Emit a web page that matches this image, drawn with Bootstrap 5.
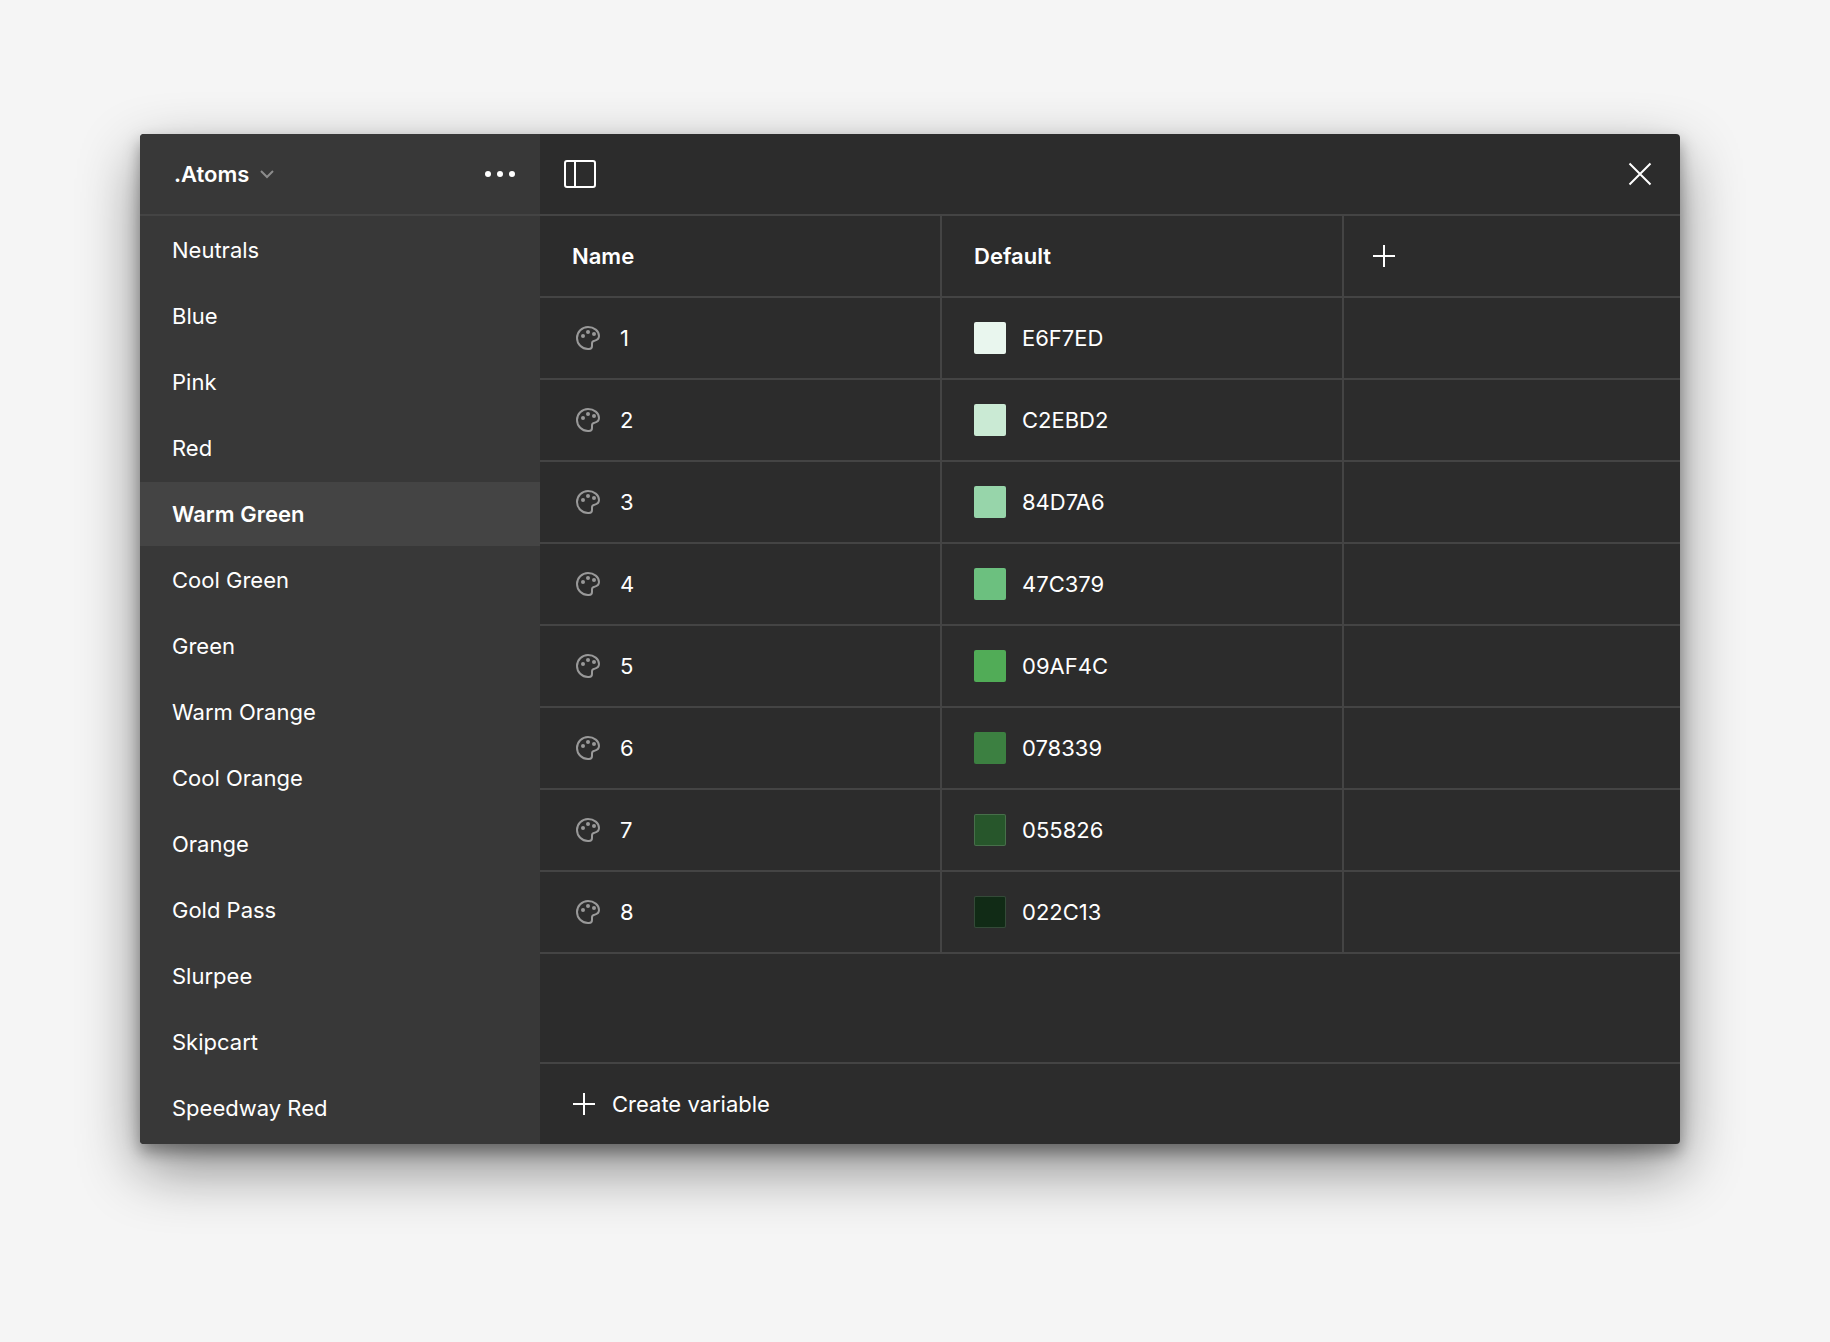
<!DOCTYPE html>
<html lang="en">
<head>
<meta charset="utf-8">
<meta name="viewport" content="width=device-width, initial-scale=1">
<title>Variables</title>
<link href="https://cdn.jsdelivr.net/npm/bootstrap@5.3.0/dist/css/bootstrap.min.css" rel="stylesheet">
<style>
  body { background: #f5f5f5; color: #fff; font-family: Inter, "Liberation Sans", sans-serif; font-size: 22px; line-height: 32px; }
  .stage { padding: 134px 150px 198px 140px; }
  .variables-panel { background: #2c2c2c; border-radius: 4px; box-shadow: 0 24px 60px rgba(0,0,0,.45), 0 8px 16px rgba(0,0,0,.35); }
  .groups { width: 400px; background: #383838; border-radius: 4px 0 0 4px; }
  .bar { height: 82px; border-bottom: 2px solid #444; }
  .groups .bar { padding: 0 24px 0 34px; }
  .plain { background: none; border: 0; padding: 0; color: #fff; display: flex; align-items: center; }
  svg { display: block; flex: none; fill: none; stroke: #fff; stroke-width: 2; }
  .chevron { stroke: #8c8c8c; }
  .dots { fill: #fff; stroke: none; }
  .group-list { gap: 2px; padding: 2px 0 4px; }
  .group-link { padding: 16px 32px; color: #fff; text-decoration: none; }
  .group-link.active { background: #444; font-weight: 600; }
  .grid-table { table-layout: fixed; border-collapse: separate; border-spacing: 0; }
  .grid-table th, .grid-table td { height: 82px; padding: 0 32px; border-bottom: 2px solid #444; font-weight: 400; vertical-align: middle; }
  .grid-table thead th { font-weight: 600; }
  .grid-table th + *, .grid-table td + td { border-left: 2px solid #444; }
  .col-value { width: 402px; }
  .col-label { width: 400px; }
  .swatch { width: 32px; height: 32px; border-radius: 2px; }
  .swatch-outlined { border: 1px solid rgba(255,255,255,.15); }
  .palette { stroke: #999; }
  .palette circle { fill: #999; stroke: none; }
  .footer-bar { height: 82px; border-top: 2px solid #444; padding: 0 32px; }
</style>
</head>
<body>
<main class="stage">
  <section class="variables-panel d-flex" aria-label="Variables">
    <aside class="groups flex-shrink-0">
      <header class="bar d-flex align-items-center justify-content-between">
        <button class="plain fw-semibold gap-2" type="button">.Atoms
          <svg class="chevron" width="20" height="20" viewBox="0 0 20 20"><path d="M4 7l6 6 6-6"/></svg>
        </button>
        <button class="plain" type="button" aria-label="More options">
          <svg class="dots" width="32" height="32" viewBox="0 0 32 32"><circle cx="4" cy="16" r="3"/><circle cx="16" cy="16" r="3"/><circle cx="28" cy="16" r="3"/></svg>
        </button>
      </header>
      <nav class="group-list d-flex flex-column" aria-label="Groups">
        <a class="group-link" href="#">Neutrals</a>
        <a class="group-link" href="#">Blue</a>
        <a class="group-link" href="#">Pink</a>
        <a class="group-link" href="#">Red</a>
        <a class="group-link active" href="#" aria-current="true">Warm Green</a>
        <a class="group-link" href="#">Cool Green</a>
        <a class="group-link" href="#">Green</a>
        <a class="group-link" href="#">Warm Orange</a>
        <a class="group-link" href="#">Cool Orange</a>
        <a class="group-link" href="#">Orange</a>
        <a class="group-link" href="#">Gold Pass</a>
        <a class="group-link" href="#">Slurpee</a>
        <a class="group-link" href="#">Skipcart</a>
        <a class="group-link" href="#">Speedway Red</a>
      </nav>
    </aside>
    <div class="flex-grow-1 d-flex flex-column">
      <header class="bar d-flex align-items-center justify-content-between px-4">
        <button class="plain" type="button" aria-label="Toggle sidebar">
          <svg width="32" height="32" viewBox="0 0 32 32"><rect x="1" y="3" width="30" height="26" rx="2"/><path d="M11 3v26"/></svg>
        </button>
        <button class="plain" type="button" aria-label="Close">
          <svg width="32" height="32" viewBox="0 0 32 32"><path d="M5.500 5.500l21 21M26.500 5.500l-21 21"/></svg>
        </button>
      </header>
      <table class="grid-table w-100">
        <colgroup><col class="col-label"><col class="col-value"><col></colgroup>
        <thead>
          <tr><th scope="col">Name</th><th scope="col">Default</th><th scope="col" class="ps-4"><button class="plain" type="button" aria-label="Add mode"><svg width="32" height="32" viewBox="0 0 32 32"><path d="M16 5v22M5 16h22"/></svg></button></th></tr>
        </thead>
        <tbody id="rows"></tbody>
      </table>
      <footer class="footer-bar d-flex align-items-center mt-auto">
        <button class="plain" type="button"><svg class="me-3" width="24" height="24" viewBox="0 0 24 24"><path d="M12 1v22M1 12h22"/></svg>Create variable</button>
      </footer>
    </div>
  </section>
</main>
<script>
  // Label, displayed colour; the darkest swatches get a thin outline
  const colors = [
    ['E6F7ED', '#e9f6ee'], ['C2EBD2', '#caead4'], ['84D7A6', '#97d5aa'], ['47C379', '#6cc07f'],
    ['09AF4C', '#51ac57'], ['078339', '#3c8041'], ['055826', '#27562b'], ['022C13', '#112b16']
  ];
  document.getElementById('rows').innerHTML = colors.map(([hex, shown], i) => `
    <tr>
      <th scope="row"><div class="d-flex align-items-center gap-3">
        <svg class="palette" width="32" height="32" viewBox="0 0 32 32"><path d="M16 5C9.900 5 5 9.900 5 16s4.900 11 11 11h1c2 0 3-1 3-3v-2.500c0-1.500.8-2.500 2.500-2.800C25.500 18 27 16 27 14 27 9 22 5 16 5z"/><circle cx="11" cy="14" r="2"/><circle cx="16" cy="10" r="2"/><circle cx="22" cy="12" r="2"/></svg>
        ${i + 1}</div></th>
      <td><div class="d-flex align-items-center gap-3"><span class="swatch${i > 5 ? ' swatch-outlined' : ''}" style="background-color:${shown}"></span>${hex}</div></td>
      <td></td>
    </tr>`).join('');
</script>
<script src="https://cdn.jsdelivr.net/npm/bootstrap@5.3.0/dist/js/bootstrap.bundle.min.js"></script>
</body>
</html>
